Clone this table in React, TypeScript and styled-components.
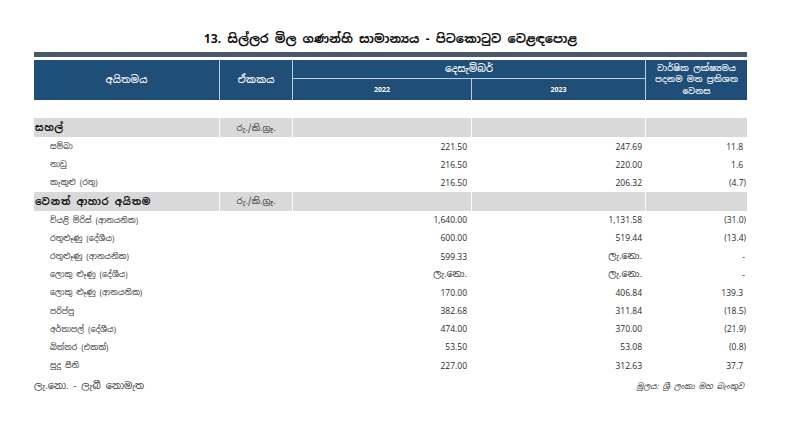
import React from "react";
import styled, { createGlobalStyle } from "styled-components";

const Global = createGlobalStyle`
  html, body { margin: 0; padding: 0; background: #ffffff; }
  body { font-family: "Noto Sans Sinhala", "Iskoola Pota", "Open Sans", "Noto Sans", sans-serif; color: #222; }
`;

const COLS = "185px 72px 178px 173px 101px";

const Page = styled.div`
  width: 800px;
  height: 421px;
  padding: 29px 0 0 34px;
  box-sizing: border-box;
`;

const Sheet = styled.div`
  width: 713px;
  display: flex;
  flex-direction: column;
`;

const Title = styled.h1`
  margin: 0;
  text-align: center;
  font-size: 12.2px;
  font-weight: 700;
  color: #111;
  line-height: 20px;
  height: 23px;
`;

const Bar = styled.div`
  height: 5px;
  background: #4a5669;
  margin-bottom: 3px;
`;

const Head = styled.div`
  display: grid;
  grid-template-columns: ${COLS};
  grid-template-rows: 18px 21px;
  gap: 1px;
  background: #bcd0e2;
  height: 40px;
`;

const HeadCell = styled.div<{ $col: string; $row: string; $small?: boolean }>`
  background: #1f4e79;
  color: #fff;
  font-size: ${(p) => (p.$small ? "8.6px" : "10px")};
  font-weight: 500;
  display: flex;
  align-items: center;
  justify-content: center;
  text-align: center;
  line-height: 11.5px;
  grid-column: ${(p) => p.$col};
  grid-row: ${(p) => p.$row};
`;

const Year = styled.span`
  font-family: "Open Sans", sans-serif;
  font-weight: 700;
  font-size: 7px;
`;

const Spacer = styled.div`
  height: 18px;
`;

const Row = styled.div<{ $group?: boolean }>`
  display: grid;
  grid-template-columns: ${COLS};
  column-gap: 1px;
  height: ${(p) => (p.$group ? "19px" : "18.2px")};
  background: #fff;
`;

const Cell = styled.div<{ $group?: boolean }>`
  background: ${(p) => (p.$group ? "#d9d9d9" : "#fff")};
  display: flex;
  align-items: center;
  justify-content: flex-end;
  font-size: 8.5px;
  color: #2a2a2a;
  white-space: nowrap;
`;

const Label = styled(Cell)<{ $group?: boolean }>`
  justify-content: flex-start;
  padding-left: ${(p) => (p.$group ? "1px" : "16px")};
  font-weight: ${(p) => (p.$group ? 700 : 400)};
  font-size: ${(p) => (p.$group ? "9.8px" : "7.9px")};
  letter-spacing: ${(p) => (p.$group ? "0.6px" : "0")};
  color: ${(p) => (p.$group ? "#111" : "#333")};
`;

const Unit = styled(Cell)`
  justify-content: center;
  font-size: 8.7px;
  color: #333;
`;

const Num = styled(Cell)<{ $pad: number }>`
  font-family: "Open Sans", "Noto Sans Sinhala", sans-serif;
  padding-right: ${(p) => p.$pad}px;
`;

const NaText = styled.span`
  font-family: "Noto Sans Sinhala", sans-serif;
  font-size: 9.4px;
  color: #333;
`;

const Footer = styled.div`
  display: flex;
  justify-content: space-between;
  align-items: center;
  margin-top: 5px;
  color: #333;
  padding-right: 3px;
`;

const Note = styled.span`
  font-size: 9.6px;
`;

const Source = styled.span`
  font-size: 7.9px;
  font-style: italic;
`;

type Item = { name: string; a: string; b: string; c: string };

const NA = "ලැ.නො.";

const groups: { name: string; unit: string; items: Item[] }[] = [
  {
    name: "සහල්",
    unit: "රු./කි.ග්‍රෑ.",
    items: [
      { name: "සම්බා", a: "221.50", b: "247.69", c: "11.8" },
      { name: "නාඩු", a: "216.50", b: "220.00", c: "1.6" },
      { name: "කැකුළු (රතු)", a: "216.50", b: "206.32", c: "(4.7)" },
    ],
  },
  {
    name: "වෙනත් ආහාර අයිතම",
    unit: "රු./කි.ග්‍රෑ.",
    items: [
      { name: "වියළි මිරිස් (ආනයනික)", a: "1,640.00", b: "1,131.58", c: "(31.0)" },
      { name: "රතුළූණු (දේශීය)", a: "600.00", b: "519.44", c: "(13.4)" },
      { name: "රතුළූණු (ආනයනික)", a: "599.33", b: NA, c: "-" },
      { name: "ලොකු ළූණු (දේශීය)", a: NA, b: NA, c: "-" },
      { name: "ලොකු ළූණු (ආනයනික)", a: "170.00", b: "406.84", c: "139.3" },
      { name: "පරිප්පු", a: "382.68", b: "311.84", c: "(18.5)" },
      { name: "අර්තාපල් (දේශීය)", a: "474.00", b: "370.00", c: "(21.9)" },
      { name: "බිත්තර (එකක්)", a: "53.50", b: "53.08", c: "(0.8)" },
      { name: "සුදු සීනි", a: "227.00", b: "312.63", c: "37.7" },
    ],
  },
];

function changePad(c: string) {
  if (c === "-") return 2;
  if (c.startsWith("(")) return 1;
  return 4;
}

function show(v: string) {
  return v === NA ? <NaText>{v}</NaText> : v;
}

export default function App() {
  return (
    <Page>
      <Global />
      <Sheet>
        <Title>13. සිල්ලර මිල ගණන්හි සාමාන්‍යය - පිටකොටුව වෙළඳපොළ</Title>
        <Bar />
        <Head>
          <HeadCell $col="1" $row="1 / 3">අයිතමය</HeadCell>
          <HeadCell $col="2" $row="1 / 3">ඒකකය</HeadCell>
          <HeadCell $col="3 / 5" $row="1">දෙසැම්බර්</HeadCell>
          <HeadCell $col="5" $row="1 / 3" $small>
            වාර්ෂික ලක්ෂ්‍යමය
            <br />
            පදනම මත ප්‍රතිශත
            <br />
            වෙනස
          </HeadCell>
          <HeadCell $col="3" $row="2">
            <Year>2022</Year>
          </HeadCell>
          <HeadCell $col="4" $row="2">
            <Year>2023</Year>
          </HeadCell>
        </Head>
        <Spacer />
        {groups.map((g) => (
          <React.Fragment key={g.name}>
            <Row $group>
              <Label $group>{g.name}</Label>
              <Unit $group>{g.unit}</Unit>
              <Cell $group />
              <Cell $group />
              <Cell $group />
            </Row>
            {g.items.map((it) => (
              <Row key={it.name}>
                <Label>{it.name}</Label>
                <Unit />
                <Num $pad={4}>{show(it.a)}</Num>
                <Num $pad={3}>{show(it.b)}</Num>
                <Num $pad={changePad(it.c)}>{it.c}</Num>
              </Row>
            ))}
          </React.Fragment>
        ))}
        <Footer>
          <Note>ලැ.නො. - ලැබී නොමැත</Note>
          <Source>මූලය: ශ්‍රී ලංකා මහ බැංකුව</Source>
        </Footer>
      </Sheet>
    </Page>
  );
}
